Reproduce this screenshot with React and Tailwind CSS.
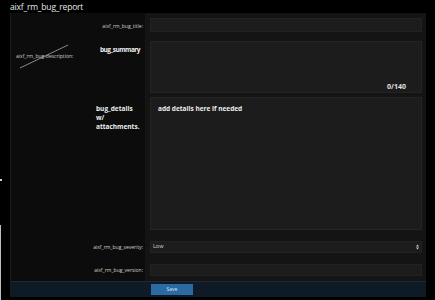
import React from 'react';

const Label = ({ children }) => (
    <div className="text-[5px] leading-none text-[#d0d0d0] text-right pr-[2px]">{children}</div>
);

export default function App() {
    return (
        <div className="relative w-[435px] h-[300px] bg-black overflow-hidden" style={{ fontFamily: '"Open Sans", "Noto Sans", sans-serif' }}>
            <div className="absolute left-0 top-[179px] w-[2px] h-[2px] bg-[#cfcfcf]" />
            <div className="absolute left-0 top-[225px] w-[1px] h-[75px] bg-[#bdbdbd]" />

            <h1 className="pl-[10px] pt-[1px] h-[13px] text-[8.5px] leading-[11px] tracking-[-0.2px] text-[#e6e6e6]">aixf_rm_bug_report</h1>

            <div className="ml-[10px] w-[416px] flex flex-col border-l border-[#1a1a1a]">
                {/* title */}
                <div className="flex h-[24px]">
                    <div className="w-[134px] bg-[#0c0c0c] pt-[11px]">
                        <Label>aixf_rm_bug_title:</Label>
                    </div>
                    <div className="flex-1 bg-[#141414] pl-[5px] pr-[4px] pt-[5px]">
                        <div className="h-[14px] bg-[#1c1c1c] border border-[#222]" />
                    </div>
                </div>

                {/* summary */}
                <div className="flex h-[58px]">
                    <div className="relative w-[134px] bg-[#0c0c0c]">
                        <div className="absolute left-[5px] top-[17px] text-[5px] leading-none text-[#d0d0d0]">aixf_rm_bug-description:</div>
                        <svg className="absolute left-[8px] top-[6px]" width="50" height="26" viewBox="0 0 50 26">
                            <line x1="1" y1="25" x2="49" y2="2" stroke="#bdbdbd" strokeWidth="0.7" />
                        </svg>
                        <div className="absolute right-[5px] top-[10px] text-[6.5px] font-bold leading-none tracking-[-0.5px] text-[#eeeeee]">bug_summary</div>
                    </div>
                    <div className="flex-1 bg-[#141414] pl-[5px] pr-[4px] pt-[4px] pb-[2px]">
                        <div className="relative h-[52px] bg-[#1c1c1c] border border-[#242424]">
                            <span className="absolute right-[15px] bottom-[2px] text-[7px] font-bold leading-none text-[#e0e0e0]">0/140</span>
                        </div>
                    </div>
                </div>

                {/* details */}
                <div className="flex h-[139px]">
                    <div className="w-[134px] bg-[#0c0c0c] pl-[85px] pt-[9px]">
                        <div className="text-[6.5px] font-bold leading-[9px] text-[#eeeeee]">bug_details<br />w/<br />attachments.</div>
                    </div>
                    <div className="flex-1 bg-[#141414] pl-[5px] pr-[4px] pt-[2px] pb-[4px]">
                        <div className="h-[133px] bg-[#1c1c1c] border border-[#242424] pl-[7px] pt-[8px] text-[6.5px] font-bold leading-none text-[#eeeeee]">
                            add details here if needed
                        </div>
                    </div>
                </div>

                {/* severity */}
                <div className="flex h-[24px]">
                    <div className="w-[134px] bg-[#0c0c0c] pt-[11px]">
                        <Label>aixf_rm_bug_severity:</Label>
                    </div>
                    <div className="flex-1 bg-[#141414] pl-[5px] pr-[4px] pt-[7px]">
                        <div className="h-[12px] bg-[#1c1c1c] border border-[#222] flex items-center justify-between pl-[2px] pr-[2px]">
                            <span className="text-[5.5px] leading-none text-[#d8d8d8]">Low</span>
                            <svg width="3" height="6" viewBox="0 0 3 6">
                                <path d="M0 2.5 L1.5 0.5 L3 2.5 Z M0 3.5 L1.5 5.5 L3 3.5 Z" fill="#cfcfcf" />
                            </svg>
                        </div>
                    </div>
                </div>

                {/* version */}
                <div className="flex h-[23px]">
                    <div className="w-[134px] bg-[#0c0c0c] pt-[10px]">
                        <Label>aixf_rm_bug_version:</Label>
                    </div>
                    <div className="flex-1 bg-[#141414] pl-[5px] pr-[4px] pt-[6px]">
                        <div className="h-[12px] bg-[#1c1c1c] border border-[#222]" />
                    </div>
                </div>

                {/* footer */}
                <div className="flex h-[16px] bg-[#0e1b27] border-t border-[#1a2a38]">
                    <div className="w-[140px]" />
                    <button className="mt-[2px] w-[42px] h-[11px] bg-[#2b6aa3] text-[5px] leading-none text-[#dbe8f5]">Save</button>
                </div>
            </div>
        </div>
    );
}
